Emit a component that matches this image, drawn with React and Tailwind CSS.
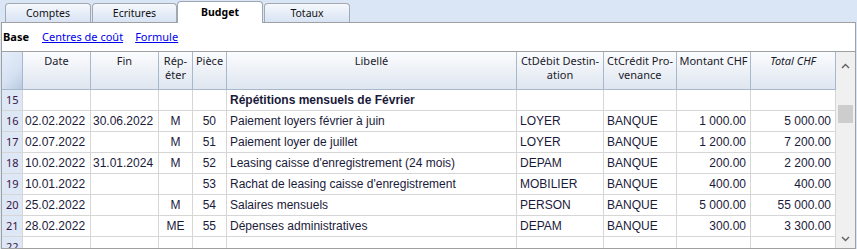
import React from 'react'

// ─── Column layout ───────────────────────────────────────────────────────────
const COLS = [
  { key: 'date',   label: ['Date'],               w: 'w-[68px]', align: 'justify-start pl-[2px]' },
  { key: 'fin',    label: ['Fin'],                w: 'w-[68px]', align: 'justify-start pl-[2px]' },
  { key: 'rep',    label: ['Rép-', 'éter'],       w: 'w-[34px]', align: 'justify-center' },
  { key: 'piece',  label: ['Pièce'],              w: 'w-[34px]', align: 'justify-end pr-[10px]' },
  { key: 'lib',    label: ['Libellé'],            w: 'w-[290px]', align: 'justify-start pl-[3px]' },
  { key: 'deb',    label: ['CtDébit Destin-', 'ation'], w: 'w-[87px]', align: 'justify-start pl-[3px]' },
  { key: 'cred',   label: ['CtCrédit Pro-', 'venance'], w: 'w-[73px]', align: 'justify-start pl-[3px]' },
  { key: 'mont',   label: ['Montant CHF'],        w: 'w-[74px]', align: 'justify-end pr-[4px]' },
  { key: 'total',  label: ['Total CHF'],          w: 'w-[85px]', align: 'justify-end pr-[4px]', italic: true },
]

const ROWS = [
  { n: 15, lib: 'Répétitions mensuels de Février', bold: true },
  { n: 16, date: '02.02.2022', fin: '30.06.2022', rep: 'M',  piece: '50', lib: 'Paiement loyers février à juin',  deb: 'LOYER',    cred: 'BANQUE', mont: '1 000.00', total: '5 000.00' },
  { n: 17, date: '02.07.2022',                    rep: 'M',  piece: '51', lib: 'Paiement loyer de juillet',       deb: 'LOYER',    cred: 'BANQUE', mont: '1 200.00', total: '7 200.00' },
  { n: 18, date: '10.02.2022', fin: '31.01.2024', rep: 'M',  piece: '52', lib: "Leasing caisse d'enregistrement (24 mois)", deb: 'DEPAM', cred: 'BANQUE', mont: '200.00', total: '2 200.00' },
  { n: 19, date: '10.01.2022',                               piece: '53', lib: "Rachat de leasing caisse d'enregistrement", deb: 'MOBILIER', cred: 'BANQUE', mont: '400.00', total: '400.00' },
  { n: 20, date: '25.02.2022',                    rep: 'M',  piece: '54', lib: 'Salaires mensuels',               deb: 'PERSON',   cred: 'BANQUE', mont: '5 000.00', total: '55 000.00' },
  { n: 21, date: '28.02.2022',                    rep: 'ME', piece: '55', lib: 'Dépenses administratives',        deb: 'DEPAM',    cred: 'BANQUE', mont: '300.00', total: '3 300.00' },
  { n: 22 },
]

const UI_FONT = "font-['Noto_Sans',sans-serif]"
const DATA_FONT = "font-['Liberation_Sans',Arial,sans-serif]"

function Tab({ label, active, className = '' }) {
  if (active) {
    return (
      <div className={`relative z-10 -mb-px h-[22px] rounded-t-[4px] border border-b-0 border-[#9ea6b2] bg-white flex items-center justify-center text-[10.5px] font-bold text-black ${className}`}>
        {label}
      </div>
    )
  }
  return (
    <div className={`h-[19px] rounded-t-[4px] border border-b-0 border-[#a3a9b3] bg-gradient-to-b from-[#f6f9fd] to-[#d8e3f4] flex items-center justify-center pt-px text-[10.5px] text-[#111] ${className}`}>
      {label}
    </div>
  )
}

function Chevron({ up }) {
  return (
    <svg width="9" height="6" viewBox="0 0 9 6" className="text-[#606060]">
      <path d={up ? 'M1 5 L4.5 1.5 L8 5' : 'M1 1 L4.5 4.5 L8 1'} fill="none" stroke="currentColor" strokeWidth="1.4" />
    </svg>
  )
}

export default function App() {
  return (
    <div className={`w-[857px] h-[249px] overflow-hidden bg-[#dae5f6] ${UI_FONT}`}>
      {/* ── Tabs ─────────────────────────────────────────────── */}
      <div className="h-[22px] flex items-end pl-[5px]">
        <Tab label="Comptes" className="w-[86px]" />
        <Tab label="Ecritures" className="ml-[1px] w-[85px]" />
        <Tab label="Budget" active className="w-[86px]" />
        <Tab label="Totaux" className="ml-[1px] w-[86px]" />
      </div>

      {/* ── Panel ────────────────────────────────────────────── */}
      <div className="ml-px w-[855px] h-[227px] border border-[#a0a0a0] bg-white flex flex-col">
        <div className="h-[28px] flex items-center pl-[1px] text-[11px]">
          <span className="font-bold text-black">Base</span>
          <span className="ml-[13px] text-[#0000ee] underline">Centres de coût</span>
          <span className="ml-[12px] text-[#0000ee] underline">Formule</span>
        </div>

        <div className="flex-1 min-h-0 flex border-t border-[#a0a0a0] overflow-hidden">
          <div className="w-[834px] flex flex-col">
            {/* header */}
            <div className="h-[38px] shrink-0 flex border-b border-[#a7b8cd] bg-gradient-to-b from-[#fbfcfe] to-[#dfe6f0]">
              <div className="w-[21px] border-r border-[#a7b8cd] bg-[linear-gradient(135deg,#e6eefa_0%,#d6e2f3_60%,#b8c9e0_100%)]" />
              {COLS.map((c) => (
                <div
                  key={c.key}
                  className={`${c.w} shrink-0 border-r border-[#a7b8cd] pt-[2px] text-center text-[11px] leading-[14px] text-[#1b1b2b] ${c.italic ? 'italic' : ''}`}
                >
                  {c.label.map((l) => (
                    <div key={l} className="whitespace-nowrap">{l}</div>
                  ))}
                </div>
              ))}
            </div>

            {/* rows */}
            {ROWS.map((r) => (
              <div key={r.n} className={`h-[21px] shrink-0 flex border-b border-[#d6d6d6] ${DATA_FONT} text-[12px] text-[#1a1a3a]`}>
                <div className={`w-[21px] shrink-0 border-r border-[#d6d6d6] bg-[#dde7f5] pl-[4px] flex items-center ${UI_FONT} text-[11px] text-[#3a1446]`}>
                  {r.n}
                </div>
                {COLS.map((c) => (
                  <div
                    key={c.key}
                    className={`${c.w} shrink-0 border-r border-[#d6d6d6] flex items-center overflow-hidden whitespace-nowrap ${c.align} ${
                      c.key === 'lib' && r.bold ? 'font-bold' : ''
                    }`}
                  >
                    {r[c.key] ?? ''}
                  </div>
                ))}
              </div>
            ))}
          </div>

          {/* scrollbar */}
          <div className="w-[19px] bg-[#f0f0f0] flex flex-col items-center">
            <div className="h-[17px] mt-[5px] flex items-center justify-center">
              <Chevron up />
            </div>
            <div className="mt-[31px] w-[15px] h-[18px] bg-[#cdcdcd]" />
            <div className="flex-1" />
            <div className="h-[17px] mb-[1px] flex items-center justify-center">
              <Chevron />
            </div>
          </div>
        </div>
      </div>
    </div>
  )
}
